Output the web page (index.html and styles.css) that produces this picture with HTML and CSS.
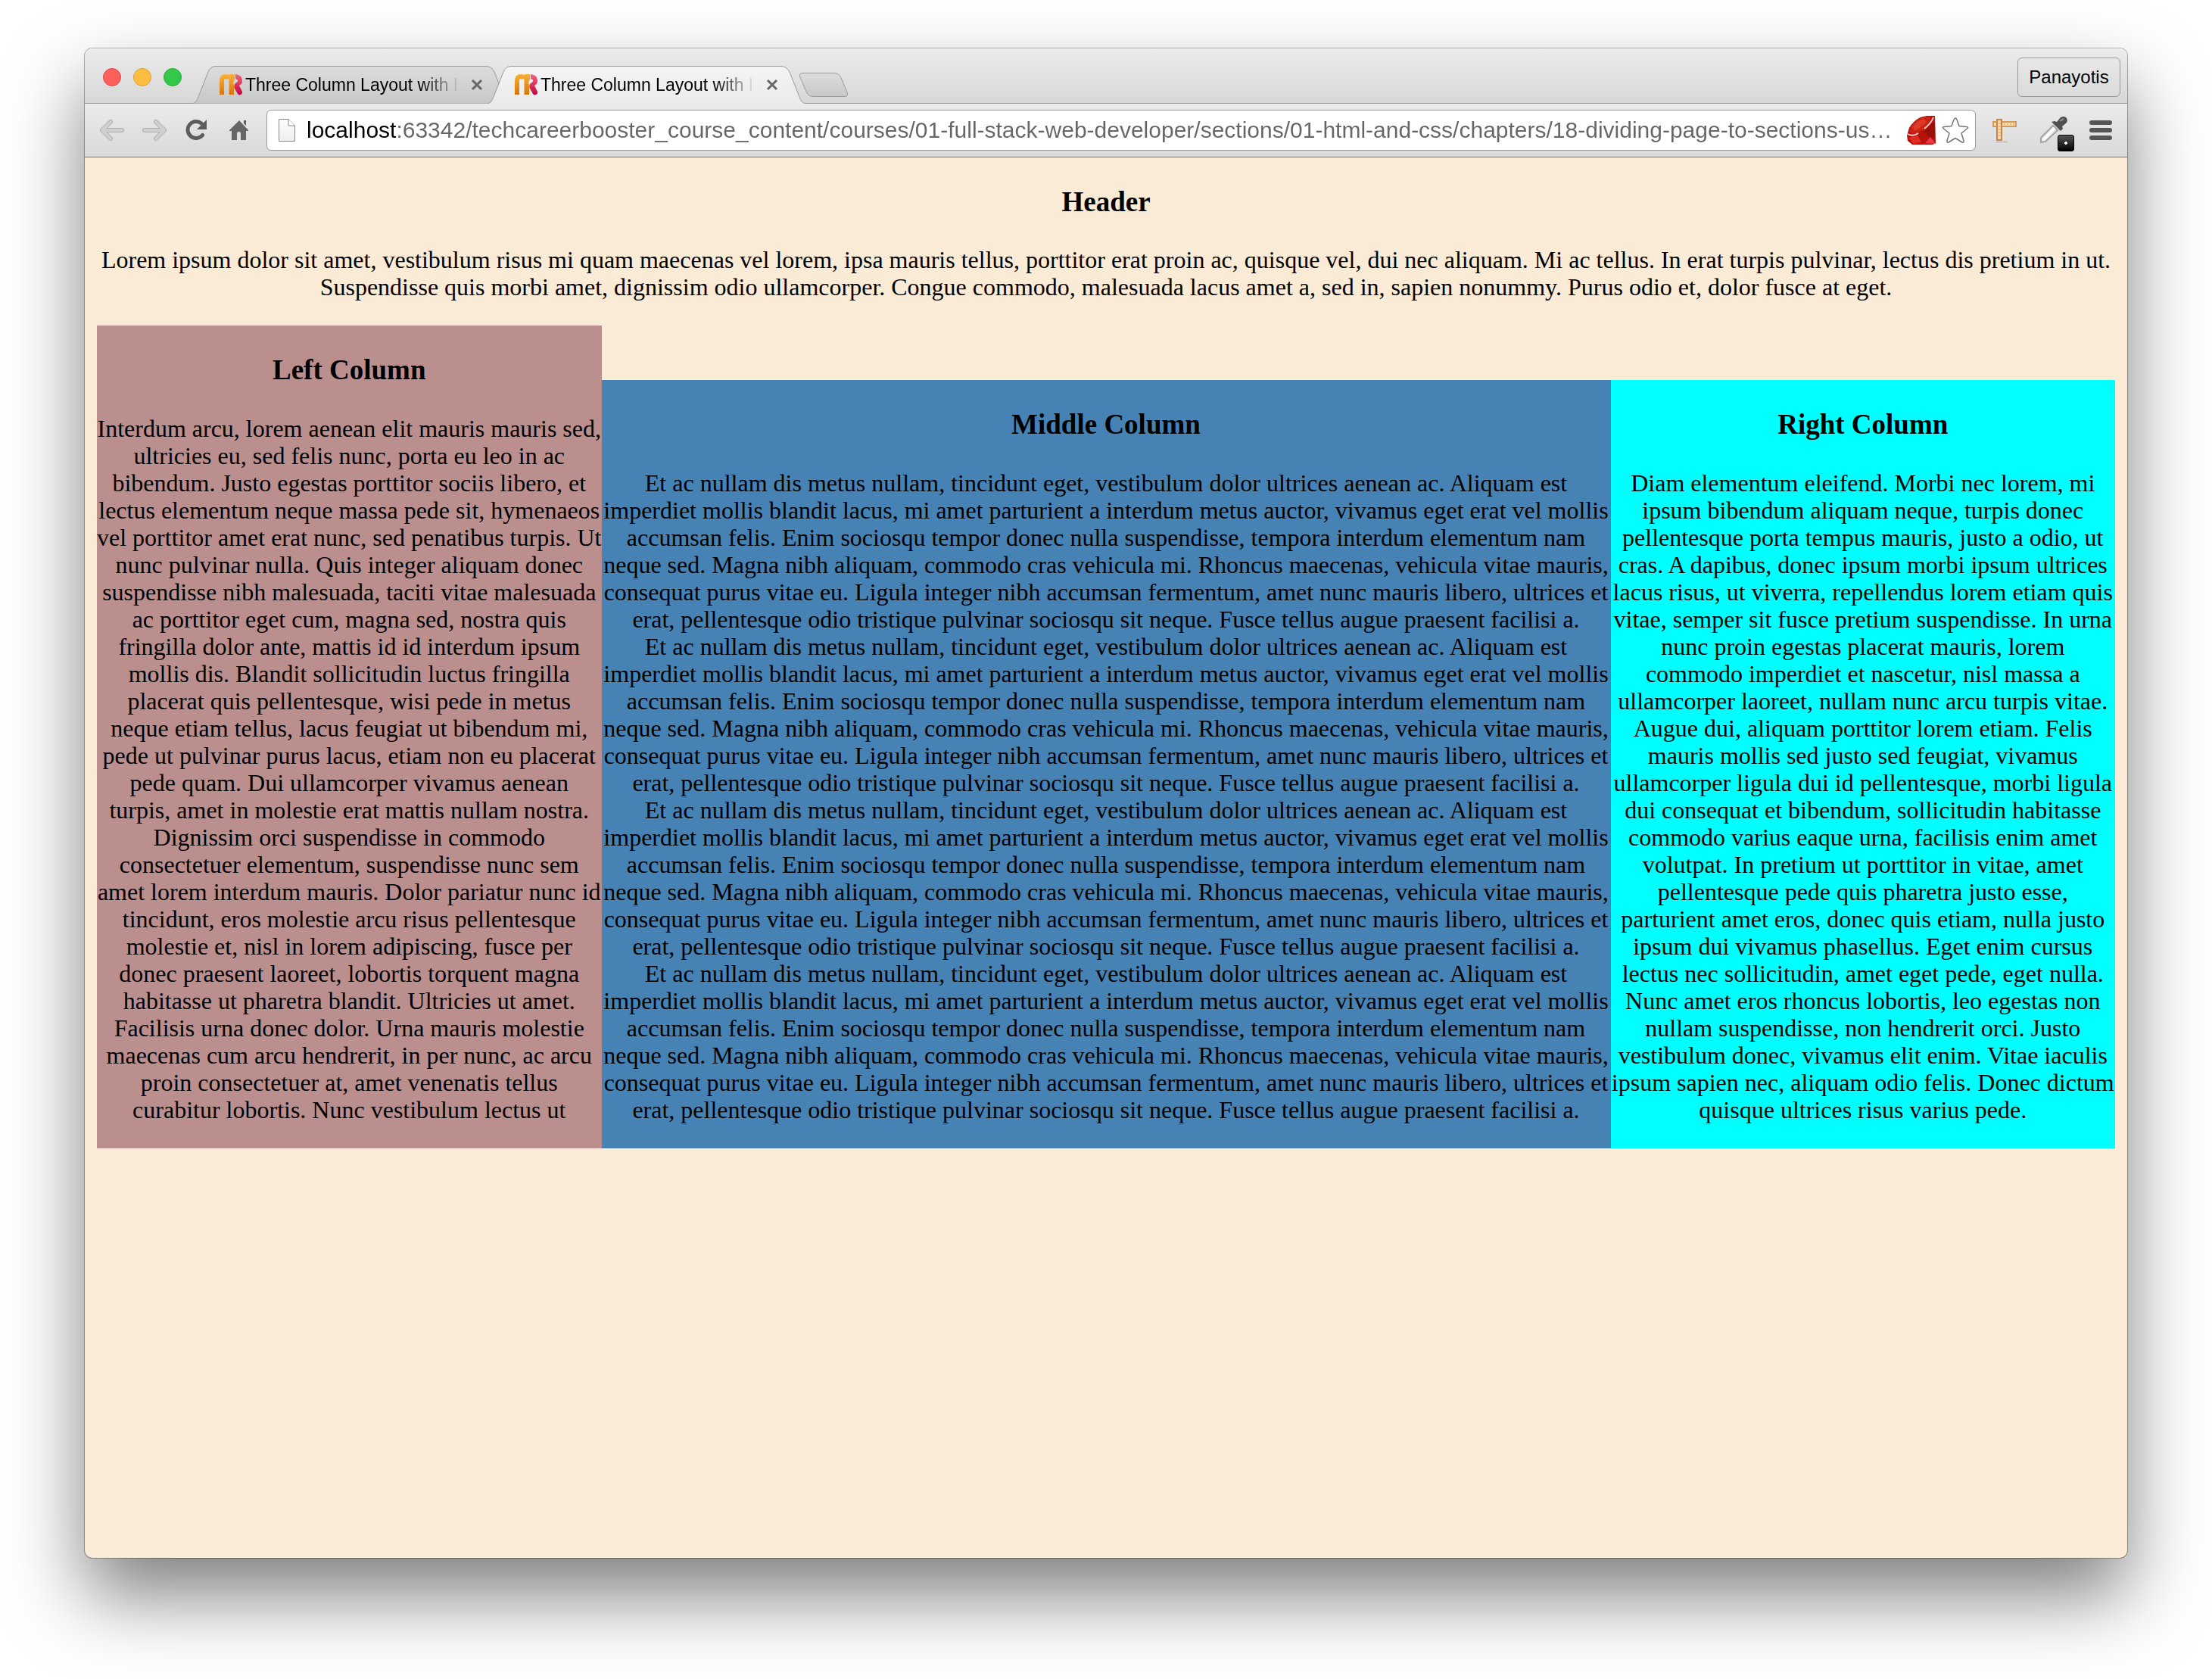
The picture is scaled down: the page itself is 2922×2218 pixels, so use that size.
FILE: index.html
```html
<!DOCTYPE html>
<html lang="en">
<head>
<meta charset="utf-8">
<title>Three Column Layout with Inline Blocks</title>
<link rel="stylesheet" href="styles.css">
</head>
<body>
<svg class="defs" width="0" height="0" aria-hidden="true">
  <defs>
    <linearGradient id="orange" gradientUnits="userSpaceOnUse" x1="0" y1="0" x2="0" y2="28"><stop offset="0" stop-color="#fbb034"/><stop offset="1" stop-color="#d9720a"/></linearGradient>
    <linearGradient id="pink" gradientUnits="userSpaceOnUse" x1="0" y1="0" x2="0" y2="28"><stop offset="0" stop-color="#f4637a"/><stop offset="1" stop-color="#c0043c"/></linearGradient>
    <linearGradient id="tab-back" x1="0" y1="0" x2="0" y2="1"><stop offset="0" stop-color="#dcdcdc"/><stop offset="1" stop-color="#c8c8c8"/></linearGradient>
    <linearGradient id="tab-front" x1="0" y1="0" x2="0" y2="1"><stop offset="0" stop-color="#f4f4f4"/><stop offset="1" stop-color="#ebebeb"/></linearGradient>
    <linearGradient id="paper" x1="0" y1="0" x2="0" y2="1"><stop offset="0" stop-color="#fff"/><stop offset="1" stop-color="#eee"/></linearGradient>
    <symbol id="favicon" viewBox="0 0 30 28">
      <path d="M0 27V9Q0 0 8 0Q10 0 11.500 1Q13 0 15 0H20V7Q17 10 19 14V27H12.500V8Q12.500 6 11 6Q9.500 6 9.500 8V9Q9.500 6 8 6Q6 6 6 9V27Z" fill="url(#orange)"/>
      <path d="M21 0Q30 1 30 8.500Q30 13 26 15L30 23Q30.500 27 27 27.500Q25 27.500 24 26L19.500 18Q18.500 13 22.500 11Q25 9.500 24 7.500Q21 6.500 21 4Z" fill="url(#pink)"/>
    </symbol>
    <symbol id="close" viewBox="0 0 16 16"><path d="M2 2L14 14M14 2L2 14" stroke="#666" stroke-width="3" fill="none"/></symbol>
  </defs>
</svg>
<div class="window">
  <div class="tabstrip">
    <div class="lights"><span class="light red"></span><span class="light yellow"></span><span class="light green"></span></div>
    <div class="tabs">
      <div class="tab">
        <svg class="shape" viewBox="0 0 420 50"><path d="M0 49.500C4 49.500 6 46 8 41L21 8Q24 0.500 31 0.500H388Q395 0.500 399 8L412 41C414 46 416 49.500 420 49.500" fill="url(#tab-back)" stroke="#999"/></svg>
        <svg class="favicon"><use href="#favicon"/></svg>
        <span class="tab-title">Three Column Layout with I</span>
        <button class="close" aria-label="Close tab"><svg width="16" height="16"><use href="#close"/></svg></button>
      </div>
      <div class="tab current">
        <svg class="shape" viewBox="0 0 420 50"><path d="M0 50V49.500C4 49.500 6 46 8 41L21 8Q24 0.500 31 0.500H388Q395 0.500 399 8L412 41C414 46 416 49.500 420 49.500V50Z" fill="url(#tab-front)"/><path d="M0 49.500C4 49.500 6 46 8 41L21 8Q24 0.500 31 0.500H388Q395 0.500 399 8L412 41C414 46 416 49.500 420 49.500" fill="none" stroke="#999"/></svg>
        <svg class="favicon"><use href="#favicon"/></svg>
        <span class="tab-title">Three Column Layout with I</span>
        <button class="close" aria-label="Close tab"><svg width="16" height="16"><use href="#close"/></svg></button>
      </div>
    </div>
    <button class="new-tab" aria-label="New tab"><svg width="66" height="34" viewBox="0 0 66 34"><path d="M6 1.500H47Q53 1.500 56 8L64 27Q66 32.500 61 32.500H19Q13 32.500 10 26L2 7Q0 1.500 6 1.500Z" fill="url(#tab-back)" stroke="#999"/></svg></button>
    <button class="profile">Panayotis</button>
  </div>
  <div class="toolbar">
    <div class="tools">
      <button aria-label="Back"><svg width="32" height="32" viewBox="0 0 32 32"><path d="M14 5L3 16L14 27M3 16H29" fill="none" stroke="#b0b0b0" stroke-width="6" stroke-linecap="round" stroke-linejoin="round"/><path d="M14 5L3 16L14 27M3 16H29" fill="none" stroke="#cfcfcf" stroke-width="4" stroke-linecap="round" stroke-linejoin="round"/></svg></button>
      <button aria-label="Forward"><svg width="32" height="32" viewBox="0 0 32 32"><path d="M18 5L29 16L18 27M29 16H3" fill="none" stroke="#b0b0b0" stroke-width="6" stroke-linecap="round" stroke-linejoin="round"/><path d="M18 5L29 16L18 27M29 16H3" fill="none" stroke="#cfcfcf" stroke-width="4" stroke-linecap="round" stroke-linejoin="round"/></svg></button>
      <button aria-label="Reload"><svg width="32" height="32" viewBox="0 0 32 32"><path d="M23.500 22.500A11 11 0 1 1 22 7" fill="none" stroke="#5c5c5c" stroke-width="5" stroke-linecap="round"/><path d="M29 2V15H16Z" fill="#5c5c5c"/></svg></button>
      <button aria-label="Home"><svg width="32" height="32" viewBox="0 0 32 32"><path d="M16 3L28 16V17H25V29H18V20Q18 18 15.500 18T13 20V29H6V17H3V16Z" fill="#666"/><path d="M22 3H25V10L22 7Z" fill="#5c5c5c"/></svg></button>
    </div>
    <div class="omnibox">
      <svg width="24" height="32" viewBox="0 0 24 32"><path d="M1.500 1.500H14L22.500 10V30.500H1.500Z" fill="url(#paper)" stroke="#888"/><path d="M14 1.500V10H22.500" fill="#fff" stroke="#888"/></svg>
      <input class="url" type="text" aria-label="Address" value="localhost:63342/techcareerbooster_course_content/courses/01-full-stack-web-developer/sections/01-html-and-css/chapters/18-dividing-page-to-sections-us…">
      <button aria-label="Ruby"><svg width="38" height="38" viewBox="0 0 38 38"><path d="M18 2L26 0H37L38 36L34 38H7L1 33L0 26L3 16Q8 7 18 2Z" fill="#b5130b"/><path d="M18 2L31 1Q33 5 28 11Q20 21 10 24L4 22Q4 9 18 2Z" fill="#cb2214"/><path d="M8 14Q14 6 22 4L26 8Q18 16 10 20Z" fill="#dd3a28"/><path d="M1 24Q8 28 15 23M23 17Q32 10 35 2" fill="none" stroke="#ffd0c8" stroke-width="2"/><path d="M30 13L37 8L37 30L28 27L22 21Z" fill="#9b0d08"/><path d="M24 36L31 28L38 37Z" fill="#f03848"/><path d="M3 29L14 26L19 35L8 37Z" fill="#e22a24"/></svg></button>
      <button aria-label="Bookmark"><svg width="36" height="36" viewBox="0 0 36 36"><path d="M18 2Q19 2 20 4L23 12.500L33 13.500Q36 14 33.500 16L26 22L29 32Q29.500 35 27 34L18 28.500L9 34Q6.500 35 7 32L10 22L2.500 16Q0 14 3 13.500L13 12.500L16 4Q17 2 18 2Z" fill="#fff" stroke="#777" stroke-width="1.500"/></svg></button>
    </div>
    <div class="extensions">
      <button aria-label="Page ruler"><svg width="34" height="34" viewBox="0 0 34 34"><path d="M5 32.500H20" stroke="#c4c4c4" stroke-width="2"/><path d="M1 6H31V12H1Z" fill="#fbdcae" stroke="#d49a5c" stroke-width="2"/><path d="M6 3H12V30H6Z" fill="#fbdcae" stroke="#c98548" stroke-width="2"/><path d="M8 8H11M8 12H11M8 16H11M8 20H11M8 24H11M16 8V10M20 8V10M24 8V10M28 8V10" stroke="#d49a5c"/></svg></button>
      <button class="dropper" aria-label="Colour picker"><svg width="38" height="38" viewBox="0 0 38 38"><path d="M2 35L2 29L18 13L24 19L8 34Z" fill="#e8e8e8" stroke="#a4a4a4" stroke-width="2"/><path d="M5 32L20 16" stroke="#fff" stroke-width="3"/><path d="M16 8L20 7L23 8L28 2Q32 0 35 2Q38 5 36 9L30 14L31 17L28 20Z" fill="#505050"/><path d="M27 7L32 4" stroke="#999" stroke-width="2"/></svg><span class="badge"></span></button>
      <button aria-label="Menu"><svg width="30" height="28" viewBox="0 0 30 28"><path d="M3 4H27M3 14H27M3 24H27" stroke="#555" stroke-width="6" stroke-linecap="round"/></svg></button>
    </div>
  </div>
  <main class="page">
    <header>
      <h3>Header</h3>
      <p>Lorem ipsum dolor sit amet, vestibulum risus mi quam maecenas vel lorem, ipsa mauris tellus, porttitor erat proin ac, quisque vel, dui nec aliquam. Mi ac tellus. In erat turpis pulvinar, lectus dis pretium in ut.<br>Suspendisse quis morbi amet, dignissim odio ullamcorper. Congue commodo, malesuada lacus amet a, sed in, sapien nonummy. Purus odio et, dolor fusce at eget.</p>
    </header>
    <div class="columns">
      <section class="column left">
        <h3>Left Column</h3>
        <p>Interdum arcu, lorem aenean elit mauris mauris sed,<br>ultricies eu, sed felis nunc, porta eu leo in ac<br>bibendum. Justo egestas porttitor sociis libero, et<br>lectus elementum neque massa pede sit, hymenaeos<br>vel porttitor amet erat nunc, sed penatibus turpis. Ut<br>nunc pulvinar nulla. Quis integer aliquam donec<br>suspendisse nibh malesuada, taciti vitae malesuada<br>ac porttitor eget cum, magna sed, nostra quis<br>fringilla dolor ante, mattis id id interdum ipsum<br>mollis dis. Blandit sollicitudin luctus fringilla<br>placerat quis pellentesque, wisi pede in metus<br>neque etiam tellus, lacus feugiat ut bibendum mi,<br>pede ut pulvinar purus lacus, etiam non eu placerat<br>pede quam. Dui ullamcorper vivamus aenean<br>turpis, amet in molestie erat mattis nullam nostra.<br>Dignissim orci suspendisse in commodo<br>consectetuer elementum, suspendisse nunc sem<br>amet lorem interdum mauris. Dolor pariatur nunc id<br>tincidunt, eros molestie arcu risus pellentesque<br>molestie et, nisl in lorem adipiscing, fusce per<br>donec praesent laoreet, lobortis torquent magna<br>habitasse ut pharetra blandit. Ultricies ut amet.<br>Facilisis urna donec dolor. Urna mauris molestie<br>maecenas cum arcu hendrerit, in per nunc, ac arcu<br>proin consectetuer at, amet venenatis tellus<br>curabitur lobortis. Nunc vestibulum lectus ut</p>
      </section>
      <section class="column middle">
        <h3>Middle Column</h3>
        <p>Et ac nullam dis metus nullam, tincidunt eget, vestibulum dolor ultrices aenean ac. Aliquam est<br>imperdiet mollis blandit lacus, mi amet parturient a interdum metus auctor, vivamus eget erat vel mollis<br>accumsan felis. Enim sociosqu tempor donec nulla suspendisse, tempora interdum elementum nam<br>neque sed. Magna nibh aliquam, commodo cras vehicula mi. Rhoncus maecenas, vehicula vitae mauris,<br>consequat purus vitae eu. Ligula integer nibh accumsan fermentum, amet nunc mauris libero, ultrices et<br>erat, pellentesque odio tristique pulvinar sociosqu sit neque. Fusce tellus augue praesent facilisi a.<br>Et ac nullam dis metus nullam, tincidunt eget, vestibulum dolor ultrices aenean ac. Aliquam est<br>imperdiet mollis blandit lacus, mi amet parturient a interdum metus auctor, vivamus eget erat vel mollis<br>accumsan felis. Enim sociosqu tempor donec nulla suspendisse, tempora interdum elementum nam<br>neque sed. Magna nibh aliquam, commodo cras vehicula mi. Rhoncus maecenas, vehicula vitae mauris,<br>consequat purus vitae eu. Ligula integer nibh accumsan fermentum, amet nunc mauris libero, ultrices et<br>erat, pellentesque odio tristique pulvinar sociosqu sit neque. Fusce tellus augue praesent facilisi a.<br>Et ac nullam dis metus nullam, tincidunt eget, vestibulum dolor ultrices aenean ac. Aliquam est<br>imperdiet mollis blandit lacus, mi amet parturient a interdum metus auctor, vivamus eget erat vel mollis<br>accumsan felis. Enim sociosqu tempor donec nulla suspendisse, tempora interdum elementum nam<br>neque sed. Magna nibh aliquam, commodo cras vehicula mi. Rhoncus maecenas, vehicula vitae mauris,<br>consequat purus vitae eu. Ligula integer nibh accumsan fermentum, amet nunc mauris libero, ultrices et<br>erat, pellentesque odio tristique pulvinar sociosqu sit neque. Fusce tellus augue praesent facilisi a.<br>Et ac nullam dis metus nullam, tincidunt eget, vestibulum dolor ultrices aenean ac. Aliquam est<br>imperdiet mollis blandit lacus, mi amet parturient a interdum metus auctor, vivamus eget erat vel mollis<br>accumsan felis. Enim sociosqu tempor donec nulla suspendisse, tempora interdum elementum nam<br>neque sed. Magna nibh aliquam, commodo cras vehicula mi. Rhoncus maecenas, vehicula vitae mauris,<br>consequat purus vitae eu. Ligula integer nibh accumsan fermentum, amet nunc mauris libero, ultrices et<br>erat, pellentesque odio tristique pulvinar sociosqu sit neque. Fusce tellus augue praesent facilisi a.</p>
      </section>
      <section class="column right">
        <h3>Right Column</h3>
        <p>Diam elementum eleifend. Morbi nec lorem, mi<br>ipsum bibendum aliquam neque, turpis donec<br>pellentesque porta tempus mauris, justo a odio, ut<br>cras. A dapibus, donec ipsum morbi ipsum ultrices<br>lacus risus, ut viverra, repellendus lorem etiam quis<br>vitae, semper sit fusce pretium suspendisse. In urna<br>nunc proin egestas placerat mauris, lorem<br>commodo imperdiet et nascetur, nisl massa a<br>ullamcorper laoreet, nullam nunc arcu turpis vitae.<br>Augue dui, aliquam porttitor lorem etiam. Felis<br>mauris mollis sed justo sed feugiat, vivamus<br>ullamcorper ligula dui id pellentesque, morbi ligula<br>dui consequat et bibendum, sollicitudin habitasse<br>commodo varius eaque urna, facilisis enim amet<br>volutpat. In pretium ut porttitor in vitae, amet<br>pellentesque pede quis pharetra justo esse,<br>parturient amet eros, donec quis etiam, nulla justo<br>ipsum dui vivamus phasellus. Eget enim cursus<br>lectus nec sollicitudin, amet eget pede, eget nulla.<br>Nunc amet eros rhoncus lobortis, leo egestas non<br>nullam suspendisse, non hendrerit orci. Justo<br>vestibulum donec, vivamus elit enim. Vitae iaculis<br>ipsum sapien nec, aliquam odio felis. Donec dictum<br>quisque ultrices risus varius pede.</p>
      </section>
    </div>
  </main>
</div>
</body>
</html>
```

FILE: styles.css
```css
* { box-sizing: border-box; }

body {
  margin: 0;
  min-height: 100vh;
  padding: 64px 112px 160px;
  display: flex;
  flex-direction: column;
  background: #fff;
}

.defs { position: absolute; }

button {
  margin: 0;
  padding: 0;
  border: 0;
  background: none;
  flex: none;
}

svg { display: block; flex: none; }

.window {
  flex: 1;
  display: flex;
  flex-direction: column;
  border-radius: 10px;
  background: #faebd7;
  box-shadow: 0 0 0 1px rgba(0, 0, 0, 0.3), 0 50px 100px rgba(0, 0, 0, 0.5);
}

.tabstrip {
  display: flex;
  align-items: flex-end;
  height: 73px;
  padding: 0 9px 0 24px;
  border-bottom: 1px solid #999;
  border-radius: 10px 10px 0 0;
  background: linear-gradient(#ebebeb, #d8d8d8);
  box-shadow: inset 0 1px #f8f8f8;
  font-family: "Liberation Sans", Arial, sans-serif;
}

.lights { display: flex; gap: 16px; padding-bottom: 22px; }

.light { width: 24px; height: 24px; border-radius: 50%; border: 1px solid; }
.red { background: #fc605b; border-color: #de4643; }
.yellow { background: #fdbe41; border-color: #dea034; }
.green { background: #34c84a; border-color: #26a934; }

.tabs { display: flex; margin-left: 14px; margin-bottom: -1px; }

.tab {
  position: relative;
  display: flex;
  align-items: center;
  width: 420px;
  height: 50px;
  padding: 0 36px;
}

.tab.current { margin-left: -30px; }

.shape { position: absolute; left: 0; top: 0; width: 420px; height: 50px; }

.favicon { position: relative; width: 30px; height: 28px; }

.tab-title {
  position: relative;
  flex: 1;
  margin: 0 4px;
  white-space: nowrap;
  font-size: 23px;
  line-height: 28px;
  color: #000;
  mask-image: linear-gradient(to right, #000 230px, transparent 284px);
}

.close { position: relative; width: 16px; height: 16px; }

.new-tab { margin: 0 auto 7px -9px; }

.profile {
  height: 52px;
  width: 136px;
  margin-bottom: 8px;
  border: 1px solid #999;
  border-radius: 6px;
  font: 24px "Liberation Sans", Arial, sans-serif;
  color: #000;
}

.toolbar {
  display: flex;
  align-items: center;
  height: 71px;
  padding: 0 20px;
  border-bottom: 1px solid #777;
  background: linear-gradient(#ebebeb, #d9d9d9);
}

.tools { display: flex; gap: 24px; }

.omnibox {
  flex: 1;
  display: flex;
  align-items: center;
  height: 54px;
  margin: 0 22px 0 20px;
  padding: 0 8px 0 14px;
  gap: 8px;
  border: 1px solid #999;
  border-radius: 6px;
  background: #fff;
}

.url {
  flex: 1;
  min-width: 0;
  margin-left: 6px;
  padding: 0;
  border: 0;
  outline: 0;
  font: 30px/40px "Liberation Sans", Arial, sans-serif;
  color: transparent;
  background: linear-gradient(to right, #000 118px, #666 118px);
  background-clip: text;
}

.extensions { display: flex; align-items: center; gap: 28px; }

.dropper { position: relative; }

.badge {
  position: absolute;
  left: 24px;
  top: 25px;
  width: 22px;
  height: 22px;
  border-radius: 3px;
  border: 1px solid #000;
  background: radial-gradient(circle, #fff 2px, transparent 2px), linear-gradient(#555, #000);
}

.page {
  padding: 0 16px;
  font-family: "Liberation Serif", "Times New Roman", serif;
  font-size: 32px;
  line-height: 36px;
  text-align: center;
  color: #000;
  white-space: nowrap;
}

.page h3 {
  margin: 0;
  padding: 37px 0;
  font-size: 37px;
  line-height: 44px;
}

.page p { margin: 0; padding-bottom: 33px; }

.page header h3 { padding-bottom: 36px; }

.columns { display: flex; align-items: flex-end; }

.column { flex: 1 1 0; min-width: 0; }
.left { background: rosybrown; }
.middle { flex-grow: 2; background: steelblue; }
.right { background: aqua; }
```
